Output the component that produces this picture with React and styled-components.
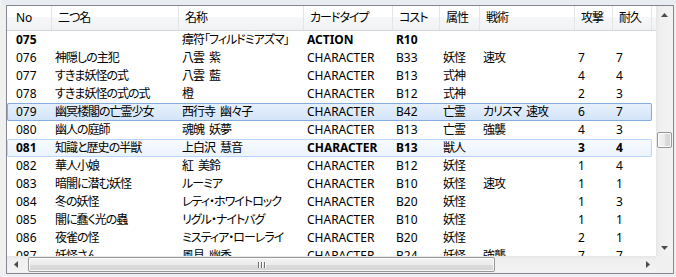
import React from 'react'
import styled, { createGlobalStyle } from 'styled-components'

const GlobalStyle = createGlobalStyle`
  html, body {
    margin: 0;
    padding: 0;
    background: #f0f0f0;
  }
  body {
    font-family: "Noto Sans", "Noto Sans CJK JP", sans-serif;
    font-size: 12px;
    color: #000;
  }
`

const Page = styled.div`
  width: 676px;
  height: 277px;
  box-sizing: border-box;
  display: flex;
  flex-direction: column;
  background: #f0f0f0;
  overflow: hidden;
`

const TopStrip = styled.div`
  height: 5px;
  background: #e9edf2;
  border-left: 1px solid #f7f7f7;
`

const Frame = styled.div`
  margin-left: 6px;
  width: 668px;
  height: 269px;
  box-sizing: border-box;
  border: 1px solid #828790;
  background: #fff;
  display: grid;
  grid-template-columns: 1fr 17px;
  grid-template-rows: 1fr 17px;
`

const List = styled.div`
  overflow: hidden;
  display: flex;
  flex-direction: column;
  font-feature-settings: "palt";
`

const Header = styled.div`
  display: flex;
  height: 25px;
  flex: none;
  box-sizing: border-box;
  border-bottom: 1px solid #d5d5d5;
  background: linear-gradient(#ffffff 0%, #ffffff 45%, #f6f7f8 46%, #f1f2f4 100%);
`

/* japanese text gets pulled in a little, it is narrower in the original ui font */
const HeaderCell = styled.div`
  flex: none;
  width: ${(p) => p.$w}px;
  box-sizing: border-box;
  padding-left: ${(p) => (p.$first ? 9 : 6)}px;
  border-right: 1px solid #e3e5e8;
  line-height: 24px;
  letter-spacing: ${(p) => (p.$first ? 0 : -1)}px;
  white-space: nowrap;
  overflow: hidden;
`

const Row = styled.div`
  display: flex;
  flex: none;
  height: 18px;
  width: 645px;
  line-height: 18px;
  border-radius: 2px;
  background: ${(p) =>
    p.$state === 'selected'
      ? 'linear-gradient(#e8f1fc, #d2e4f9)'
      : p.$state === 'hot'
      ? 'linear-gradient(#f8fbfe, #eaf2fc)'
      : 'transparent'};
  box-shadow: ${(p) =>
    p.$state === 'selected'
      ? 'inset 0 0 0 1px #84acdd'
      : p.$state === 'hot'
      ? 'inset 0 0 0 1px #b8d6fb'
      : 'none'};
`

/* only the latin columns turn bold, the japanese glyphs stay regular */
const Cell = styled.div`
  flex: none;
  width: ${(p) => p.$w}px;
  box-sizing: border-box;
  padding-left: ${(p) => (p.$first ? 9 : 3)}px;
  font-weight: ${(p) => (p.$bold ? 700 : 400)};
  letter-spacing: ${(p) => (p.$latin ? 0 : -1)}px;
  white-space: nowrap;
  overflow: hidden;
`

const VScroll = styled.div`
  display: flex;
  flex-direction: column;
  background: linear-gradient(90deg, #e6e6e6 0%, #efefef 20%, #f3f3f3 100%);
`

const HScroll = styled.div`
  display: flex;
  background: linear-gradient(#e6e6e6 0%, #efefef 20%, #f3f3f3 100%);
`

const Corner = styled.div`
  background: #f0f0f0;
`

const ArrowButton = styled.div`
  flex: none;
  width: 17px;
  height: 17px;
  display: flex;
  align-items: center;
  justify-content: center;
`

const VTrack = styled.div`
  flex: 1;
  display: flex;
  flex-direction: column;
  align-items: center;
`

const HTrack = styled.div`
  flex: 1;
  display: flex;
  align-items: center;
`

const VThumb = styled.div`
  width: 15px;
  height: 16px;
  box-sizing: border-box;
  margin-top: ${(p) => p.$offset}px;
  border: 1px solid #979797;
  border-radius: 2px;
  background: linear-gradient(90deg, #f2f2f2 0%, #ebebeb 50%, #dcdcdc 51%, #d4d4d4 100%);
  box-shadow: inset 0 0 0 1px rgba(255, 255, 255, 0.8);
`

const HThumb = styled.div`
  height: 15px;
  width: ${(p) => p.$size}px;
  box-sizing: border-box;
  margin-left: ${(p) => p.$offset}px;
  border: 1px solid #979797;
  border-radius: 2px;
  background: linear-gradient(#f2f2f2 0%, #ebebeb 50%, #dcdcdc 51%, #d4d4d4 100%);
  box-shadow: inset 0 0 0 1px rgba(255, 255, 255, 0.8);
  display: flex;
  align-items: center;
  justify-content: center;
`

const Grip = styled.div`
  display: flex;
  gap: 1px;
  span {
    width: 1px;
    height: 6px;
    background: #6d6d6d;
    box-shadow: 1px 0 0 #ffffff;
  }
  span + span {
    margin-left: 1px;
  }
`

const columns = [
  { key: 'no', label: 'No', w: 45, latin: true },
  { key: 'title', label: '二つ名', w: 127 },
  { key: 'name', label: '名称', w: 125 },
  { key: 'type', label: 'カードタイプ', w: 89, latin: true },
  { key: 'cost', label: 'コスト', w: 47, latin: true },
  { key: 'attr', label: '属性', w: 40 },
  { key: 'tactic', label: '戦術', w: 95 },
  { key: 'atk', label: '攻撃', w: 38, latin: true },
  { key: 'hp', label: '耐久', w: 39, latin: true },
]

// en space between family and given name, a normal space collapses too much here
const sp = '\u2002'

const cards = [
  { no: '075', title: '', name: '瘴符「フィルドミアズマ」', type: 'ACTION', cost: 'R10', attr: '', tactic: '', atk: '', hp: '', bold: true },
  { no: '076', title: '神隠しの主犯', name: `八雲${sp}紫`, type: 'CHARACTER', cost: 'B33', attr: '妖怪', tactic: '速攻', atk: '7', hp: '7' },
  { no: '077', title: 'すきま妖怪の式', name: `八雲${sp}藍`, type: 'CHARACTER', cost: 'B13', attr: '式神', tactic: '', atk: '4', hp: '4' },
  { no: '078', title: 'すきま妖怪の式の式', name: '橙', type: 'CHARACTER', cost: 'B12', attr: '式神', tactic: '', atk: '2', hp: '3' },
  { no: '079', title: '幽冥楼閣の亡霊少女', name: `西行寺${sp}幽々子`, type: 'CHARACTER', cost: 'B42', attr: '亡霊', tactic: `カリスマ${sp}速攻`, atk: '6', hp: '7', state: 'selected' },
  { no: '080', title: '幽人の庭師', name: `魂魄${sp}妖夢`, type: 'CHARACTER', cost: 'B13', attr: '亡霊', tactic: '強襲', atk: '4', hp: '3' },
  { no: '081', title: '知識と歴史の半獣', name: `上白沢${sp}慧音`, type: 'CHARACTER', cost: 'B13', attr: '獣人', tactic: '', atk: '3', hp: '4', bold: true, state: 'hot' },
  { no: '082', title: '華人小娘', name: `紅${sp}美鈴`, type: 'CHARACTER', cost: 'B12', attr: '妖怪', tactic: '', atk: '1', hp: '4' },
  { no: '083', title: '暗闇に潜む妖怪', name: 'ルーミア', type: 'CHARACTER', cost: 'B10', attr: '妖怪', tactic: '速攻', atk: '1', hp: '1' },
  { no: '084', title: '冬の妖怪', name: 'レティ・ホワイトロック', type: 'CHARACTER', cost: 'B20', attr: '妖怪', tactic: '', atk: '1', hp: '3' },
  { no: '085', title: '闇に蠢く光の蟲', name: 'リグル・ナイトバグ', type: 'CHARACTER', cost: 'B10', attr: '妖怪', tactic: '', atk: '1', hp: '1' },
  { no: '086', title: '夜雀の怪', name: 'ミスティア・ローレライ', type: 'CHARACTER', cost: 'B20', attr: '妖怪', tactic: '', atk: '2', hp: '1' },
  { no: '087', title: '妖怪さん', name: `風見${sp}幽香`, type: 'CHARACTER', cost: 'B24', attr: '妖怪', tactic: '強襲', atk: '7', hp: '7' },
]

const arrowPoints = {
  up: '0,4 3.5,0 7,4',
  down: '0,0 3.5,4 7,0',
  left: '4,0 0,3.5 4,7',
  right: '0,0 4,3.5 0,7',
}

function Arrow({ dir }) {
  const vertical = dir === 'up' || dir === 'down'
  return (
    <ArrowButton>
      <svg width={vertical ? 7 : 4} height={vertical ? 4 : 7}>
        <polygon points={arrowPoints[dir]} fill="#4a4a4a" />
      </svg>
    </ArrowButton>
  )
}

export default function App() {
  return (
    <Page>
      <GlobalStyle />
      <TopStrip />
      <Frame>
        <List>
          <Header>
            {columns.map((c, i) => (
              <HeaderCell key={c.key} $w={c.w} $first={i === 0}>
                {c.label}
              </HeaderCell>
            ))}
          </Header>
          {cards.map((card) => (
            <Row key={card.no} $state={card.state}>
              {columns.map((c, i) => (
                <Cell
                  key={c.key}
                  $w={c.w}
                  $first={i === 0}
                  $latin={c.latin}
                  $bold={card.bold && c.latin}
                >
                  {card[c.key]}
                </Cell>
              ))}
            </Row>
          ))}
        </List>
        <VScroll>
          <Arrow dir="up" />
          <VTrack>
            <VThumb $offset={109} />
          </VTrack>
          <Arrow dir="down" />
        </VScroll>
        <HScroll>
          <Arrow dir="left" />
          <HTrack>
            <HThumb $offset={4} $size={467}>
              <Grip>
                <span />
                <span />
                <span />
              </Grip>
            </HThumb>
          </HTrack>
          <Arrow dir="right" />
        </HScroll>
        <Corner />
      </Frame>
    </Page>
  )
}
